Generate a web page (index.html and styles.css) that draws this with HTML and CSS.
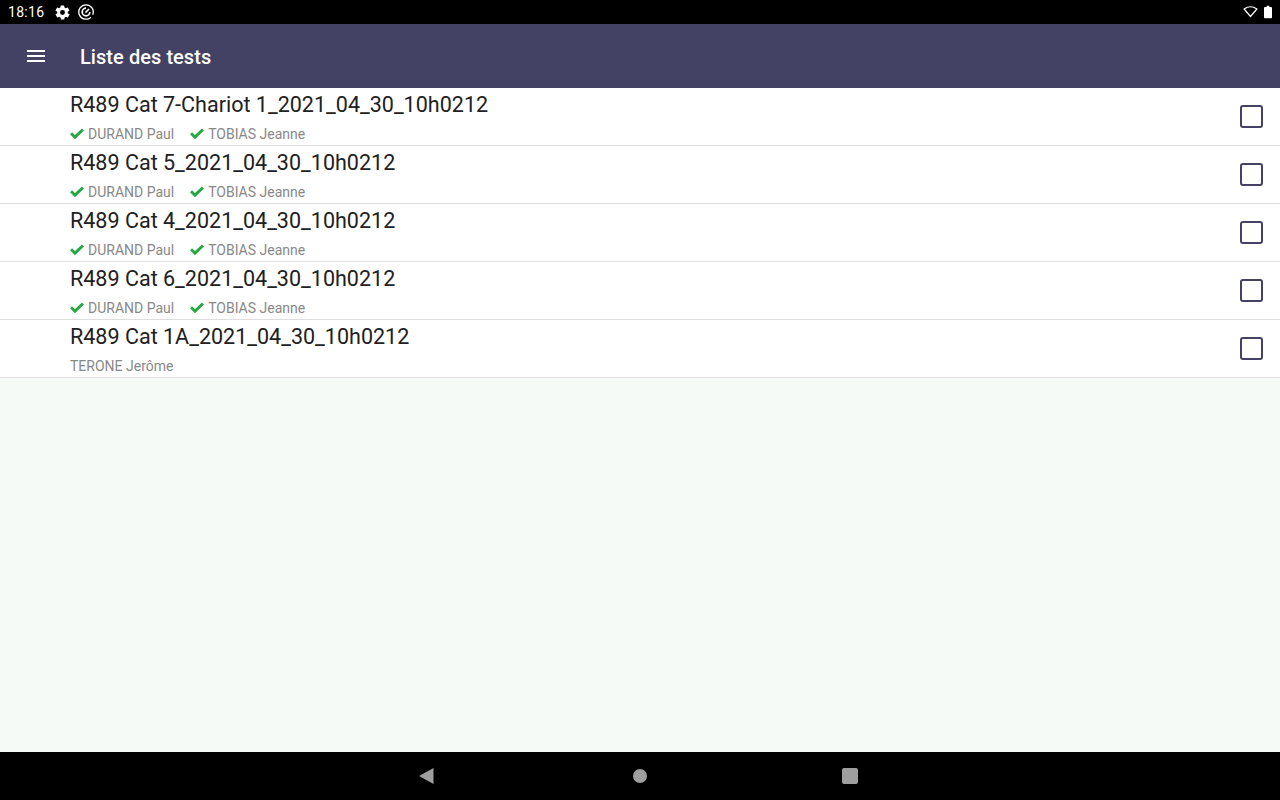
FILE: index.html
```html
<!DOCTYPE html>
<html lang="fr">
<head>
	<meta charset="utf-8">
	<title>Liste des tests</title>
	<link rel="stylesheet" href="styles.css">
</head>
<body>
	<div class="statusbar">
		<span class="clock">18:16</span>
		<svg class="st_gear" viewBox="0 0 24 24" width="17" height="17"><path fill="#fff" d="M19.4 13a7.5 7.5 0 0 0 0-2l2.1-1.6a.5.5 0 0 0 .1-.7l-2-3.4a.5.5 0 0 0-.6-.2l-2.5 1a7.300 7.300 0 0 0-1.700-1l-.4-2.700a.5.5 0 0 0-.5-.4h-4a.5.5 0 0 0-.5.4l-.4 2.700a7.300 7.300 0 0 0-1.700 1l-2.500-1a.5.5 0 0 0-.6.2l-2 3.400a.5.5 0 0 0 .1.7L4.600 11a7.500 7.500 0 0 0 0 2l-2.100 1.600a.5.5 0 0 0-.1.7l2 3.400a.5.5 0 0 0 .6.2l2.500-1a7.300 7.300 0 0 0 1.700 1l.4 2.700a.5.5 0 0 0 .5.4h4a.5.5 0 0 0 .5-.4l.4-2.700a7.300 7.300 0 0 0 1.700-1l2.500 1a.5.5 0 0 0 .6-.2l2-3.400a.5.5 0 0 0-.1-.7zM12 15.500a3.500 3.500 0 1 1 0-7 3.500 3.500 0 0 1 0 7z"/></svg>
		<svg class="st_round" viewBox="0 0 16 16" width="16" height="16"><path fill="none" stroke="#fff" stroke-width="1.300" d="M13 13.200A7.200 7.200 0 1 1 14.700 10.700"/><path fill="none" stroke="#fff" stroke-width="1.700" d="M11.800 8A3.800 3.800 0 1 1 8 4.200"/><path stroke="#fff" stroke-width="1.600" d="M7.400 8.600L11 5"/></svg>
		<span class="spacer"></span>
		<svg viewBox="0 0 16 14" width="15" height="14"><path fill="none" stroke="#fff" stroke-width="1.300" d="M1.200 3.800Q8 -1 14.800 3.800L8 11.800z"/></svg>
		<svg class="st_batt" viewBox="0 0 9 14" width="8" height="14"><path fill="#fff" d="M3 0h3v1.500h2a1 1 0 0 1 1 1V13a1 1 0 0 1-1 1H1a1 1 0 0 1-1-1V2.500a1 1 0 0 1 1-1h2z"/></svg>
	</div>

	<div class="toolbar">
		<div class="burger"><i></i><i></i><i></i></div>
		<h1>Liste des tests</h1>
	</div>

	<ul class="list">
		<li>
			<div class="info">
				<p class="name">R489 Cat 7-Chariot 1_2021_04_30_10h0212</p>
				<p class="people">
					<span><svg class="check" viewBox="0 0 14 11" width="14" height="11"><path d="M1 5.200l4 4L13 1.500"/></svg>DURAND Paul</span>
					<span><svg class="check" viewBox="0 0 14 11" width="14" height="11"><path d="M1 5.200l4 4L13 1.500"/></svg>TOBIAS Jeanne</span>
				</p>
			</div>
			<i class="box"></i>
		</li>
		<li>
			<div class="info">
				<p class="name">R489 Cat 5_2021_04_30_10h0212</p>
				<p class="people">
					<span><svg class="check" viewBox="0 0 14 11" width="14" height="11"><path d="M1 5.200l4 4L13 1.500"/></svg>DURAND Paul</span>
					<span><svg class="check" viewBox="0 0 14 11" width="14" height="11"><path d="M1 5.200l4 4L13 1.500"/></svg>TOBIAS Jeanne</span>
				</p>
			</div>
			<i class="box"></i>
		</li>
		<li>
			<div class="info">
				<p class="name">R489 Cat 4_2021_04_30_10h0212</p>
				<p class="people">
					<span><svg class="check" viewBox="0 0 14 11" width="14" height="11"><path d="M1 5.200l4 4L13 1.500"/></svg>DURAND Paul</span>
					<span><svg class="check" viewBox="0 0 14 11" width="14" height="11"><path d="M1 5.200l4 4L13 1.500"/></svg>TOBIAS Jeanne</span>
				</p>
			</div>
			<i class="box"></i>
		</li>
		<li>
			<div class="info">
				<p class="name">R489 Cat 6_2021_04_30_10h0212</p>
				<p class="people">
					<span><svg class="check" viewBox="0 0 14 11" width="14" height="11"><path d="M1 5.200l4 4L13 1.500"/></svg>DURAND Paul</span>
					<span><svg class="check" viewBox="0 0 14 11" width="14" height="11"><path d="M1 5.200l4 4L13 1.500"/></svg>TOBIAS Jeanne</span>
				</p>
			</div>
			<i class="box"></i>
		</li>
		<li>
			<div class="info">
				<p class="name">R489 Cat 1A_2021_04_30_10h0212</p>
				<p class="people"><span>TERONE Jerôme</span></p>
			</div>
			<i class="box"></i>
		</li>
	</ul>

	<div class="navbar">
		<svg class="nav_back" viewBox="0 0 15 16" width="15" height="16"><path fill="#9e9e9e" d="M0 8L14.500 0V16z"/></svg>
		<i class="nav_circle"></i>
		<i class="nav_square"></i>
	</div>
</body>
</html>
```

FILE: styles.css
```css
*{margin:0;padding:0;box-sizing:border-box;}
html,body{height:100%;}
body{display:flex;flex-direction:column;height:800px;overflow:hidden;background:#F5FAF6;font-family:Roboto,"Liberation Sans",sans-serif;}

.statusbar{display:flex;align-items:center;height:24px;padding:0 8px 0 8px;background:#000;color:#fff;font-size:14px;}
.statusbar .clock{letter-spacing:0.3px;}
.st_gear{margin-left:10px;}
.st_round{margin-left:7px;}
.spacer{flex:1;}
.st_batt{margin-left:6px;}

.toolbar{display:flex;align-items:center;height:64px;padding:2px 0 0 27px;background:#434164;color:#fff;}
.burger{width:18px;margin-top:-2px;}
.burger i{display:block;height:2px;margin-bottom:3px;background:#fff;}
.burger i:last-child{margin-bottom:0;}
.toolbar h1{margin-left:35px;font-size:20px;font-weight:500;letter-spacing:0.06px;}

.list{list-style:none;}
.list li{display:flex;align-items:center;justify-content:space-between;height:58px;padding:0 17px 0 70px;background:#fff;border-bottom:1px solid #DEDEDE;}
.info{align-self:flex-start;}
.name{margin-top:4px;font-size:21.54px;line-height:26px;color:#212121;}
.people{display:flex;gap:16px;margin-top:6px;font-size:14px;line-height:20px;color:#888;}
.people span{display:flex;align-items:center;}
.check{margin:-2px 4px 0 0;fill:none;stroke:#28A745;stroke-width:3;}
.box{display:block;width:23px;height:23px;border:2px solid #434164;border-radius:3px;}

.navbar{display:flex;align-items:center;justify-content:center;height:48px;margin-top:auto;padding-right:4px;background:#000;}
.nav_back{margin-right:199px;}
.nav_circle{display:block;width:14px;height:14px;margin-right:195px;border-radius:50%;background:#9e9e9e;}
.nav_square{display:block;width:16px;height:16px;border-radius:2px;background:#9e9e9e;}
```
